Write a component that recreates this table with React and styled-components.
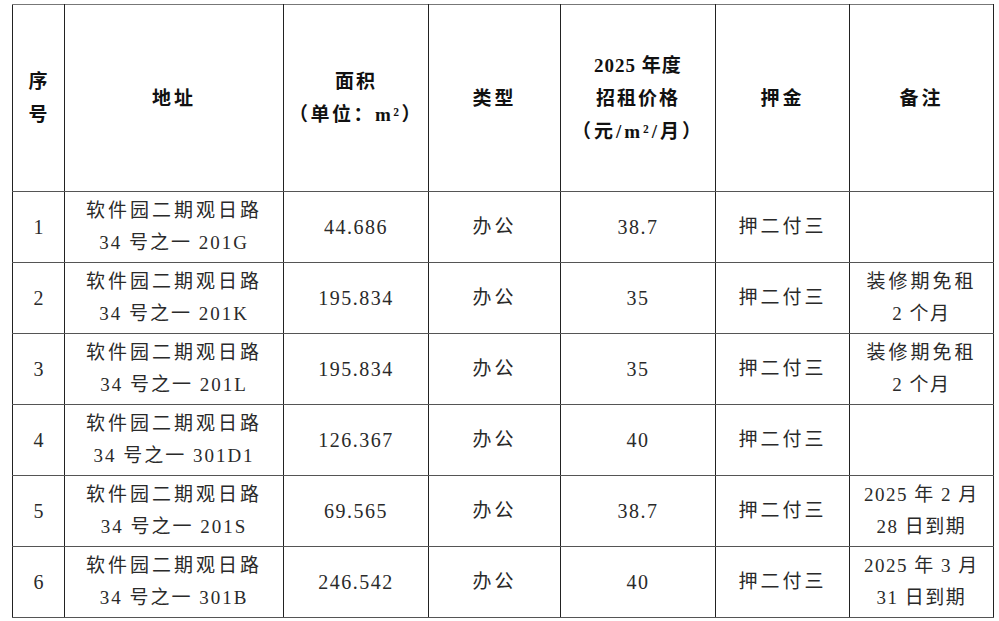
import React from 'react';
import styled, { createGlobalStyle } from 'styled-components';

const GlobalStyle = createGlobalStyle`
  html, body {
    margin: 0;
    padding: 0;
    background: #ffffff;
  }
`;

const Page = styled('div')`
  width: 999px;
  height: 621px;
  padding: 4px 0 0 12px;
  box-sizing: border-box;
  background: #fff;
  font-family: "Liberation Serif", "Noto Sans CJK SC", serif;
  color: #222;
`;

const Table = styled('table')`
  border-collapse: collapse;
  table-layout: fixed;
  width: 981px;
  border: 1.5px solid #666;
`;

const HeadCell = styled('th')`
  height: 186px;
  padding: 0 4px;
  border: 1px solid #222;
  border-top-color: #777;
  border-bottom: 1.5px solid #555;
  font-weight: 700;
  font-size: 19px;
  line-height: 33px;
  letter-spacing: ${(props) => (props.spaced ? '3px' : '1px')};
  color: #111;
  text-align: center;
  vertical-align: middle;
`;

const Cell = styled('td')`
  height: 70px;
  padding: 0 2px;
  border: 1px solid #222;
  border-bottom: 1.5px solid #555;
  font-size: ${(props) => (props.num ? '20px' : '19px')};
  line-height: 32px;
  letter-spacing: ${(props) => props.spacing || '3px'};
  text-align: center;
  vertical-align: middle;
  color: #2a2a2a;
`;

const Line = styled('div')`
  white-space: nowrap;
  letter-spacing: ${(props) => props.spacing || 'inherit'};
`;

const columns = [52, 219, 145, 132, 155, 134, 144];

const rows = [
  { no: 1, unit: '201G', area: '44.686', price: '38.7', note: [] },
  { no: 2, unit: '201K', area: '195.834', price: '35', note: ['装修期免租', '2 个月'] },
  { no: 3, unit: '201L', area: '195.834', price: '35', note: ['装修期免租', '2 个月'] },
  { no: 4, unit: '301D1', area: '126.367', price: '40', note: [] },
  { no: 5, unit: '201S', area: '69.565', price: '38.7', note: ['2025 年 2 月', '28 日到期'] },
  { no: 6, unit: '301B', area: '246.542', price: '40', note: ['2025 年 3 月', '31 日到期'] },
];

const App = () => {
  return (
    <Page>
      <GlobalStyle />
      <Table>
        <colgroup>
          {columns.map((w, i) => (
            <col key={i} style={{ width: w }} />
          ))}
        </colgroup>
        <thead>
          <tr>
            <HeadCell>
              <Line>序</Line>
              <Line>号</Line>
            </HeadCell>
            <HeadCell spaced>地址</HeadCell>
            <HeadCell>
              <Line spacing="2px">面积</Line>
              <Line spacing="2.5px">（单位：m²）</Line>
            </HeadCell>
            <HeadCell spaced>类型</HeadCell>
            <HeadCell>
              <Line>2025 年度</Line>
              <Line spacing="2px">招租价格</Line>
              <Line spacing="3px">（元/m²/月）</Line>
            </HeadCell>
            <HeadCell spaced>押金</HeadCell>
            <HeadCell spaced>备注</HeadCell>
          </tr>
        </thead>
        <tbody>
          {rows.map((r) => (
            <tr key={r.no}>
              <Cell num spacing="0">{r.no}</Cell>
              <Cell>
                <Line>软件园二期观日路</Line>
                <Line spacing="2px">34 号之一 {r.unit}</Line>
              </Cell>
              <Cell num spacing="1.5px">{r.area}</Cell>
              <Cell>办公</Cell>
              <Cell num spacing="1.5px">{r.price}</Cell>
              <Cell>押二付三</Cell>
              <Cell spacing="1.5px">
                {r.note.map((n, i) => (
                  <Line key={n} spacing={i === 0 && /^装/.test(n) ? '3px' : '1.5px'}>
                    {n}
                  </Line>
                ))}
              </Cell>
            </tr>
          ))}
        </tbody>
      </Table>
    </Page>
  );
};

export default App;
